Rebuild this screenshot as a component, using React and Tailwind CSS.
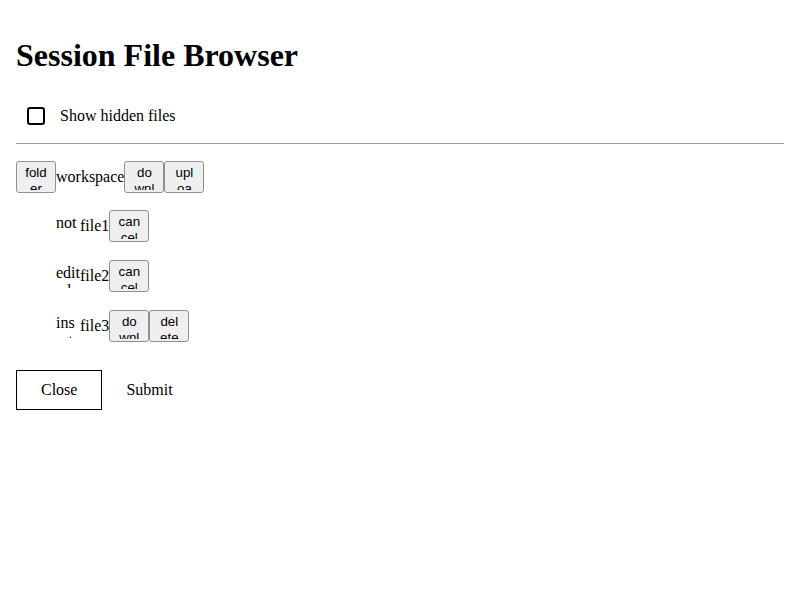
import React from 'react';

const serif = "font-['Liberation_Serif',_'Times_New_Roman',_serif]";

// small native-looking button, fixed box so long labels wrap and get clipped
const TinyButton = ({ label }) => (
    <button className="w-[40px] h-[32px] shrink-0 overflow-hidden block px-[8px] py-[1px] border border-[#8f8f8f] rounded-[3px] bg-[#efefef] text-black font-['Liberation_Sans',_Arial,_sans-serif] text-[13.33px] leading-[16px] text-center">
        <span className="block h-[25px] overflow-hidden break-all">{label}</span>
    </button>
);

// status box (icon slot) that is too narrow for its text
const Status = ({ text }) => (
    <span className="inline-block w-[24.5px] mr-[-0.5px] h-[24px] shrink-0 overflow-hidden break-all text-left leading-[18.4px]">{text}</span>
);

const files = [
    { name: 'file1', status: 'notmodified', actions: ['cancel'] },
    { name: 'file2', status: 'edited', actions: ['cancel'] },
    { name: 'file3', status: 'inserted', actions: ['download', 'delete'] },
];

export default function App() {
    return (
        <div className={`p-4 bg-white text-black text-[16px] ${serif}`}>
            <h1 className="mt-[21px] mb-[22px] text-[32px] leading-[37px] font-bold">Session File Browser</h1>

            {/* hidden files toggle */}
            <label className="flex items-center h-[38px]">
                <input type="checkbox" className="appearance-none ml-[11px] mt-[1px] w-[18px] h-[18px] border-2 border-black rounded-[3px] bg-white" />
                <span className="ml-[15px] mt-[1px]">Show hidden files</span>
            </label>

            <hr className="mt-[9px] border-0 border-t border-[#9a9a9a]" />

            {/* tree */}
            <div className="mt-[17px]">
                <div className="flex items-center h-[32px]">
                    <TinyButton label="folder" />
                    <span>workspace</span>
                    <TinyButton label="download" />
                    <TinyButton label="upload" />
                </div>
                {files.map((f, i) => (
                    <div key={f.name} className={`flex items-center h-[32px] pl-[40px] ${i === 0 ? 'mt-[17px]' : 'mt-[18px]'}`}>
                        <Status text={f.status} />
                        <span>{f.name}</span>
                        {f.actions.map((a) => (
                            <TinyButton key={a} label={a} />
                        ))}
                    </div>
                ))}
            </div>

            <div className="flex mt-[28px]">
                <button className="px-[24px] py-[10px] leading-[18px] border border-black bg-white">Close</button>
                <button className="px-[24px] py-[10px] leading-[18px] bg-white">Submit</button>
            </div>
        </div>
    );
}
